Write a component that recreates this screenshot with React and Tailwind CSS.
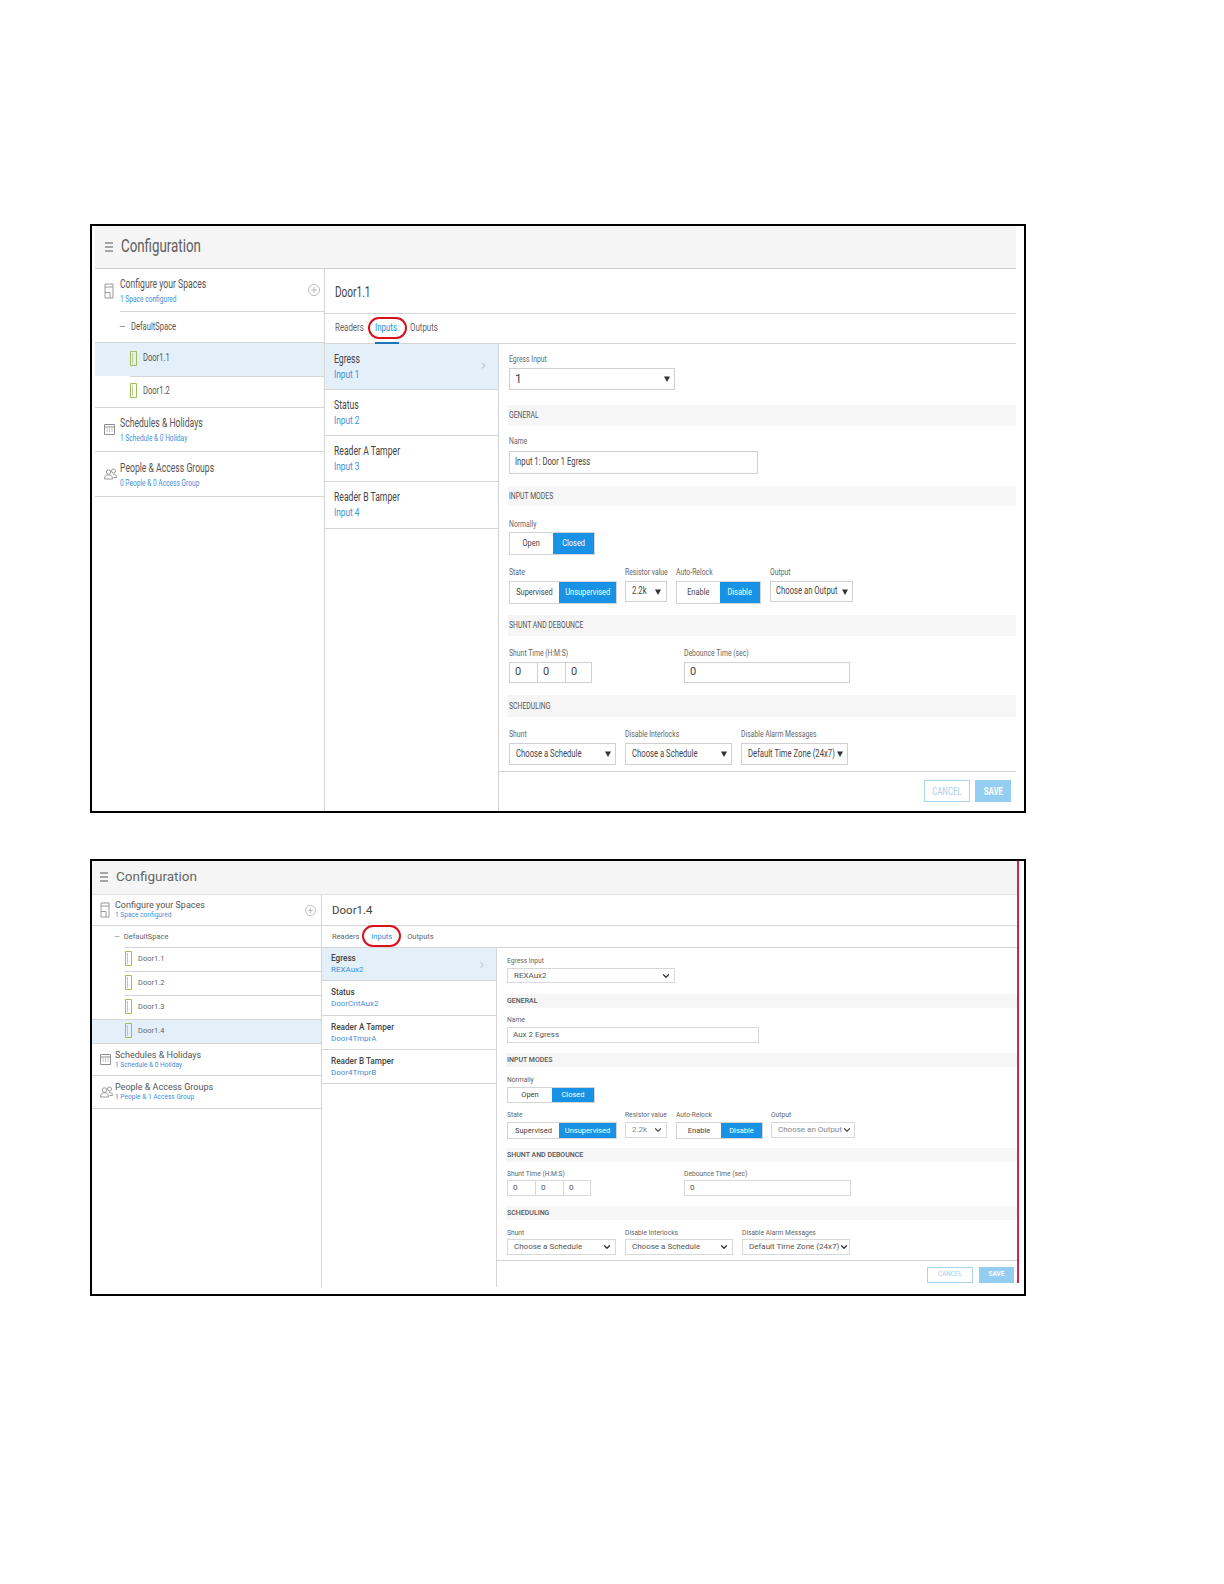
import React from "react";
import { ChevronDown, ChevronRight } from "lucide-react";

const FONT = "font-['Roboto','Liberation_Sans',sans-serif]";

// the first screenshot has a squeezed, condensed face: Roboto narrowed to fit
function C({ children }) {
  return <span className="inline-block origin-left scale-x-[0.72] whitespace-nowrap">{children}</span>;
}

function CM({ children }) {
  return <span className="inline-block origin-center scale-x-[0.78] whitespace-nowrap">{children}</span>;
}

function CF({ children }) {
  return <span className="inline-block w-0 grow origin-left scale-x-[0.72] whitespace-nowrap">{children}</span>;
}

function Hamburger() {
  return (
    <div className="flex w-[8px] flex-col gap-[2px]">
      <div className="h-[2px] bg-[#a5a5a5]" />
      <div className="h-[2px] bg-[#a5a5a5]" />
      <div className="h-[2px] bg-[#a5a5a5]" />
    </div>
  );
}

function BuildingIcon() {
  return (
    <svg width="11" height="16" viewBox="0 0 11 16" fill="none" stroke="#9a9a9a" strokeWidth="1">
      <path d="M1 1h8v14H1z" />
      <path d="M1 4h8" />
      <path d="M1 9.500h5v5.500" />
    </svg>
  );
}

function CalendarIcon() {
  return (
    <svg width="11" height="11" viewBox="0 0 11 11" fill="none" stroke="#8f8f8f" strokeWidth="1">
      <path d="M.5 .5h10v10H.5z" />
      <path d="M.5 3h10" />
      <path d="M2.500 5h1M5 5h1M7.500 5h1M2.500 7h1M5 7h1M7.500 7h1" />
    </svg>
  );
}

function PeopleIcon() {
  return (
    <svg width="13" height="12" viewBox="0 0 13 12" fill="none" stroke="#8f8f8f" strokeWidth="0.9">
      <circle cx="4.500" cy="4" r="2.200" />
      <circle cx="9.500" cy="3" r="2" />
      <path d="M.5 11c0-3 1.500-4.200 4-4.200s4 1.200 4 4.200z" />
      <path d="M9 6.200c2.200 0 3.500 1 3.500 3.300H9.500" />
    </svg>
  );
}

function DoorIcon() {
  return (
    <svg width="7" height="15" viewBox="0 0 7 15" fill="none" stroke="#9cbf5a" strokeWidth="1">
      <path d="M.5 .5h6v14h-6z" />
      <path d="M2.500 2v11" stroke="#c9c9a0" />
    </svg>
  );
}

function PlusCircle({ size }) {
  return (
    <svg width={size} height={size} viewBox="0 0 12 12" fill="none" stroke="#a8a8a8" strokeWidth="0.8">
      <circle cx="6" cy="6" r="5.500" />
      <path d="M6 3v6M3 6h6" />
    </svg>
  );
}

function Triangle() {
  return (
    <svg width="6" height="6" viewBox="0 0 6 6" className="shrink-0" fill="#333">
      <path d="M0 .5h6L3 6z" />
    </svg>
  );
}

function Chevron({ muted }) {
  return <ChevronDown size={10} strokeWidth={3} className={muted ? "shrink-0 text-[#555]" : "shrink-0 text-[#333]"} />;
}

function Toggle({ className, left, right, leftW, text }) {
  return (
    <div className={`flex border border-[#d4d4d4] ${className}`}>
      <div className={`flex items-center justify-center ${leftW} ${text} text-[#444]`}>{left}</div>
      <div className={`flex flex-1 items-center justify-center bg-[#1792e5] ${text} text-white`}>{right}</div>
    </div>
  );
}

function Panel1() {
  const tree = "text-[10.5px] text-[#555]";
  const link = "text-[9.2px] leading-[13px] text-[#3f8fd8]";
  const head = "text-[12px] leading-[16px] text-[#555]";
  const label = "text-[9.5px] leading-[12px] text-[#666]";
  const bar = "flex items-center bg-[#f6f6f6] pl-[1px] text-[9.5px] text-[#555]";
  const box = "flex items-center border border-[#d0d0d0] bg-white text-[10.7px] text-[#444]";
  const items = [
    ["Egress", "Input 1", "h-[46px] bg-[#e3f0fa]"],
    ["Status", "Input 2", "h-[46px]"],
    ["Reader A Tamper", "Input 3", "h-[46px]"],
    ["Reader B Tamper", "Input 4", "h-[47px]"],
  ];
  return (
    <div className={`${FONT} flex h-[589px] w-[936px] flex-col border-2 border-black pl-[3px] pr-[8px]`}>
      <div className="flex h-[43px] shrink-0 items-center gap-[8px] border-b border-[#cfcfcf] bg-[#f5f5f5] pl-[10px]">
        <Hamburger />
        <span className="text-[18.500px] text-[#5d5d5d]"><C>Configuration</C></span>
      </div>
      <div className="flex min-h-0 flex-1">
        <div className="w-[230px] shrink-0 border-r border-[#d5d5d5]">
          <div className="flex h-[43px] items-center">
            <div className="ml-[9px] flex w-[16px] shrink-0"><BuildingIcon /></div>
            <div className="flex h-full flex-1 items-center border-b border-[#d5d5d5]">
              <div className="flex-1">
                <div className={head}><C>Configure your Spaces</C></div>
                <div className={link}><C>1 Space configured</C></div>
              </div>
              <div className="mr-[4px]"><PlusCircle size={12} /></div>
            </div>
          </div>
          <div className={`flex h-[31px] items-center border-b border-[#d5d5d5] pl-[24px] ${tree}`}>
            <span className="mr-[5px] text-[#888]">–</span><C>DefaultSpace</C>
          </div>
          <div className="flex h-[33px] items-center bg-[#e3f0fa] pb-[3px] pl-[35px]">
            <DoorIcon />
            <span className={`ml-[6px] ${tree}`}><C>Door1.1</C></span>
          </div>
          <div className="ml-[35px] flex h-[31px] items-center border-t border-[#d5d5d5] pb-[3px]">
            <DoorIcon />
            <span className={`ml-[6px] ${tree}`}><C>Door1.2</C></span>
          </div>
          <div className="flex h-[44px] items-center border-t border-[#d5d5d5] pl-[9px]">
            <div className="flex w-[16px] shrink-0"><CalendarIcon /></div>
            <div>
              <div className={head}><C>Schedules &amp; Holidays</C></div>
              <div className={link}><C>1 Schedule &amp; 0 Holiday</C></div>
            </div>
          </div>
          <div className="flex h-[46px] items-center border-y border-[#d5d5d5] pl-[9px]">
            <div className="flex w-[16px] shrink-0"><PeopleIcon /></div>
            <div>
              <div className={head}><C>People &amp; Access Groups</C></div>
              <div className={link}><C>0 People &amp; 0 Access Group</C></div>
            </div>
          </div>
        </div>
        <div className="flex min-w-0 flex-1 flex-col">
          <div className="flex h-[45px] shrink-0 items-center border-b border-[#d5d5d5] pl-[10px] pt-[3px] text-[14px] text-[#444]"><C>Door1.1</C></div>
          <div className="flex h-[30px] shrink-0 items-center border-b border-[#d5d5d5] pl-[10px] text-[11px] text-[#666]">
            <span className="w-[40px]"><C>Readers</C></span>
            <span className="relative w-[35px] text-[#1792e5]">
              <C>Inputs</C>
              <span className="absolute -left-[7px] -top-[3px] h-[22px] w-[39px] rounded-full border-2 border-[#d5121e]" />
              <span className="absolute -bottom-[8px] left-0 h-[3px] w-[24px] bg-[#1c75bc]" />
            </span>
            <span><C>Outputs</C></span>
          </div>
          <div className="flex min-h-0 flex-1">
            <div className="w-[174px] shrink-0 border-r border-[#d5d5d5]">
              {items.map(([title, sub, cls]) => (
                <div key={title} className={`relative flex flex-col justify-center border-b border-[#d5d5d5] pl-[9px] ${cls}`}>
                  <div className="text-[12px] leading-[15px] text-[#444]"><C>{title}</C></div>
                  <div className="text-[11.5px] leading-[15px] text-[#3f8fd8]"><C>{sub}</C></div>
                  {title === "Egress" && <ChevronRight size={11} className="absolute right-[9px] top-[16px] text-[#aaa]" />}
                </div>
              ))}
            </div>
            <div className="flex min-w-0 flex-1 flex-col">
              <div className="flex flex-1 flex-col pl-[10px]">
                <div className={`${label} pt-[9px]`}><C>Egress Input</C></div>
                <div className={`${box} mt-[3px] h-[22px] w-[166px] justify-between pl-[5px] pr-[4px] text-[12px]`}>1<Triangle /></div>
                <div className={`${bar} -ml-[1px] mt-[15px] h-[21px]`}><C>GENERAL</C></div>
                <div className={`${label} mt-[9px]`}><C>Name</C></div>
                <div className={`${box} mt-[4px] h-[23px] w-[249px] pl-[5px]`}><C>Input 1: Door 1 Egress</C></div>
                <div className={`${bar} -ml-[1px] mt-[12px] h-[20px]`}><C>INPUT MODES</C></div>
                <div className={`${label} mt-[12px]`}><C>Normally</C></div>
                <Toggle className="mt-[2px] h-[23px] w-[86px]" left={<CM>Open</CM>} right={<CM>Closed</CM>} leftW="w-[43px]" text="text-[9.5px]" />
                <div className="mt-[11px] flex">
                  <div className="w-[116px]">
                    <div className={label}><C>State</C></div>
                    <Toggle className="mt-[3px] h-[23px] w-[108px]" left={<CM>Supervised</CM>} right={<CM>Unsupervised</CM>} leftW="w-[50px]" text="text-[9.5px]" />
                  </div>
                  <div className="w-[51px]">
                    <div className={label}><C>Resistor value</C></div>
                    <div className={`${box} mt-[3px] h-[21px] w-[42px] justify-between pl-[6px] pr-[5px] text-[10.5px]`}><CF>2.2k</CF><Triangle /></div>
                  </div>
                  <div className="w-[94px]">
                    <div className={label}><C>Auto-Relock</C></div>
                    <Toggle className="mt-[3px] h-[23px] w-[85px]" left={<CM>Enable</CM>} right={<CM>Disable</CM>} leftW="w-[43px]" text="text-[9.5px]" />
                  </div>
                  <div>
                    <div className={label}><C>Output</C></div>
                    <div className={`${box} mt-[3px] h-[21px] w-[83px] justify-between pl-[5px] pr-[4px] text-[9.700px]`}><CF>Choose an Output</CF><Triangle /></div>
                  </div>
                </div>
                <div className={`${bar} -ml-[1px] mt-[11px] h-[21px]`}><C>SHUNT AND DEBOUNCE</C></div>
                <div className="mt-[11px] flex">
                  <div className="w-[175px]">
                    <div className={label}><C>Shunt Time (H:M:S)</C></div>
                    <div className="mt-[3px] flex h-[21px] w-[83px] border border-[#d0d0d0] text-[11px] text-[#444]">
                      <div className="flex w-[28px] items-center border-r border-[#d0d0d0] pl-[5px]">0</div>
                      <div className="flex w-[28px] items-center border-r border-[#d0d0d0] pl-[5px]">0</div>
                      <div className="flex flex-1 items-center pl-[5px]">0</div>
                    </div>
                  </div>
                  <div>
                    <div className={label}><C>Debounce Time (sec)</C></div>
                    <div className={`${box} mt-[3px] h-[21px] w-[166px] pl-[5px] text-[11px]`}>0</div>
                  </div>
                </div>
                <div className={`${bar} -ml-[1px] mt-[12px] h-[22px]`}><C>SCHEDULING</C></div>
                <div className="mt-[11px] flex">
                  {[["Shunt", "Choose a Schedule", "w-[116px]"], ["Disable Interlocks", "Choose a Schedule", "w-[116px]"], ["Disable Alarm Messages", "Default Time Zone (24x7)", ""]].map(([l, v, col]) => (
                    <div key={l} className={col}>
                      <div className={label}><C>{l}</C></div>
                      <div className={`${box} mt-[3px] h-[22px] w-[107px] justify-between pl-[6px] pr-[4px] text-[9.500px]`}><CF>{v}</CF><Triangle /></div>
                    </div>
                  ))}
                </div>
              </div>
              <div className="flex h-[40px] shrink-0 items-start justify-end gap-[5px] border-t border-[#d5d5d5] pr-[5px] pt-[8px] text-[10px]">
                <div className="flex h-[22px] w-[46px] items-center justify-center border border-[#a9d4ef] text-[#a9cfe8]"><CM>CANCEL</CM></div>
                <div className="flex h-[22px] w-[36px] items-center justify-center bg-[#93cdf1] font-bold text-white"><CM>SAVE</CM></div>
              </div>
            </div>
          </div>
        </div>
      </div>
    </div>
  );
}

function Panel2() {
  const tree = "text-[7.5px] text-[#666]";
  const link = "text-[6.6px] leading-[9px] text-[#3f8fd8]";
  const head = "text-[9px] leading-[11px] text-[#555]";
  const label = "text-[6.7px] leading-[8px] text-[#666]";
  const bar = "flex items-center bg-[#f6f6f6] pl-[1px] text-[7px] font-medium text-[#555]";
  const box = "flex items-center border border-[#d8d8d8] bg-white text-[8px] text-[#555]";
  const items = [
    ["Egress", "REXAux2", "h-[33px] bg-[#e3f0fa]"],
    ["Status", "DoorCntAux2", "h-[35px]"],
    ["Reader A Tamper", "Door4TmprA", "h-[34px]"],
    ["Reader B Tamper", "Door4TmprB", "h-[34px]"],
  ];
  return (
    <div className={`${FONT} relative mt-[46px] flex h-[437px] w-[936px] flex-col border-2 border-black pr-[6px]`}>
      <div className="flex h-[34px] shrink-0 items-center gap-[8px] border-b border-[#e2e2e2] bg-[#f5f5f5] pb-[2px] pl-[8px]">
        <Hamburger />
        <span className="text-[13.5px] text-[#666]">Configuration</span>
      </div>
      <div className="flex h-[392px] shrink-0">
        <div className="w-[230px] shrink-0 border-r border-[#d5d5d5]">
          <div className="flex h-[31px] items-center border-b border-[#d5d5d5] pl-[8px]">
            <div className="flex w-[15px] shrink-0"><BuildingIcon /></div>
            <div className="flex-1">
              <div className={head}>Configure your Spaces</div>
              <div className={link}>1 Space configured</div>
            </div>
            <div className="mr-[5px]"><PlusCircle size={11} /></div>
          </div>
          <div className={`flex h-[21px] items-center pl-[22px] ${tree}`}>
            <span className="mr-[4px] text-[#888]">—</span>DefaultSpace
          </div>
          {["Door1.1", "Door1.2", "Door1.3"].map((d) => (
            <div key={d} className="ml-[33px] flex h-[24px] items-center border-t border-[#d5d5d5] pb-[2px]">
              <DoorIcon />
              <span className={`ml-[6px] ${tree}`}>{d}</span>
            </div>
          ))}
          <div className="flex h-[25px] items-center border-y border-[#d5d5d5] bg-[#e3f0fa] pb-[2px] pl-[33px]">
            <DoorIcon />
            <span className={`ml-[6px] ${tree}`}>Door1.4</span>
          </div>
          <div className="flex h-[32px] items-center border-b border-[#d5d5d5] pl-[8px]">
            <div className="flex w-[15px] shrink-0"><CalendarIcon /></div>
            <div>
              <div className={head}>Schedules &amp; Holidays</div>
              <div className={link}>1 Schedule &amp; 0 Holiday</div>
            </div>
          </div>
          <div className="flex h-[33px] items-center border-b border-[#d5d5d5] pl-[8px]">
            <div className="flex w-[15px] shrink-0"><PeopleIcon /></div>
            <div>
              <div className={head}>People &amp; Access Groups</div>
              <div className={link}>1 People &amp; 1 Access Group</div>
            </div>
          </div>
        </div>
        <div className="flex min-w-0 flex-1 flex-col">
          <div className="flex h-[31px] shrink-0 items-center border-b border-[#d5d5d5] pl-[10px] pt-[1px] text-[11.5px] text-[#444]">Door1.4</div>
          <div className="flex h-[22px] shrink-0 items-center border-b border-[#d5d5d5] pl-[10px] text-[7.5px] text-[#666]">
            <span>Readers</span>
            <span className="relative ml-[12px] text-[#1792e5]">
              Inputs
              <span className="absolute -left-[9px] -top-[6px] h-[22px] w-[39px] rounded-full border-2 border-[#d5121e]" />
            </span>
            <span className="ml-[15px]">Outputs</span>
          </div>
          <div className="flex min-h-0 flex-1">
            <div className="w-[175px] shrink-0 border-r border-[#d5d5d5]">
              {items.map(([title, sub, cls]) => (
                <div key={title} className={`relative flex flex-col justify-center border-b border-[#d5d5d5] pl-[9px] ${cls}`}>
                  <div className="text-[8.2px] font-medium leading-[11px] text-[#444]">{title}</div>
                  <div className="text-[8px] leading-[11px] text-[#3f8fd8]">{sub}</div>
                  {title === "Egress" && <ChevronRight size={10} className="absolute right-[9px] top-[12px] text-[#aaa]" />}
                </div>
              ))}
            </div>
            <div className="flex min-w-0 flex-1 flex-col">
              <div className="flex flex-1 flex-col pl-[10px]">
                <div className={`${label} pt-[9px]`}>Egress Input</div>
                <div className={`${box} mt-[3px] h-[15px] w-[168px] justify-between pl-[6px] pr-[3px]`}>REXAux2<Chevron /></div>
                <div className={`${bar} -ml-[1px] mt-[11px] h-[14px]`}>GENERAL</div>
                <div className={`${label} mt-[8px]`}>Name</div>
                <div className={`${box} mt-[3px] h-[16px] w-[252px] pl-[5px]`}>Aux 2 Egress</div>
                <div className={`${bar} -ml-[1px] mt-[10px] h-[14px]`}>INPUT MODES</div>
                <div className={`${label} mt-[9px]`}>Normally</div>
                <Toggle className="mt-[3px] h-[16px] w-[88px]" left="Open" right="Closed" leftW="w-[44px]" text="text-[7.5px]" />
                <div className="mt-[8px] flex">
                  <div className="w-[118px]">
                    <div className={label}>State</div>
                    <Toggle className="mt-[3px] h-[17px] w-[110px]" left="Supervised" right="Unsupervised" leftW="w-[51px]" text="text-[7.5px]" />
                  </div>
                  <div className="w-[51px]">
                    <div className={label}>Resistor value</div>
                    <div className={`${box} mt-[3px] h-[16px] w-[42px] justify-between pl-[6px] pr-[3px] text-[#888]`}>2.2k<Chevron muted /></div>
                  </div>
                  <div className="w-[95px]">
                    <div className={label}>Auto-Relock</div>
                    <Toggle className="mt-[3px] h-[17px] w-[87px]" left="Enable" right="Disable" leftW="w-[44px]" text="text-[7.5px]" />
                  </div>
                  <div>
                    <div className={label}>Output</div>
                    <div className={`${box} mt-[3px] h-[16px] w-[84px] justify-between whitespace-nowrap pl-[6px] pr-[3px] text-[7.5px] text-[#888]`}>Choose an Output<Chevron muted /></div>
                  </div>
                </div>
                <div className={`${bar} -ml-[1px] mt-[9px] h-[14px]`}>SHUNT AND DEBOUNCE</div>
                <div className="mt-[8px] flex">
                  <div className="w-[177px]">
                    <div className={label}>Shunt Time (H:M:S)</div>
                    <div className="mt-[2px] flex h-[16px] w-[84px] border border-[#d8d8d8] text-[8px] text-[#555]">
                      <div className="flex w-[28px] items-center border-r border-[#d8d8d8] pl-[5px]">0</div>
                      <div className="flex w-[28px] items-center border-r border-[#d8d8d8] pl-[5px]">0</div>
                      <div className="flex flex-1 items-center pl-[5px]">0</div>
                    </div>
                  </div>
                  <div>
                    <div className={label}>Debounce Time (sec)</div>
                    <div className={`${box} mt-[2px] h-[16px] w-[167px] pl-[5px]`}>0</div>
                  </div>
                </div>
                <div className={`${bar} -ml-[1px] mt-[10px] h-[14px]`}>SCHEDULING</div>
                <div className="mt-[9px] flex">
                  {[["Shunt", "Choose a Schedule", "w-[118px]", "w-[109px]"], ["Disable Interlocks", "Choose a Schedule", "w-[117px]", "w-[108px]"], ["Disable Alarm Messages", "Default Time Zone (24x7)", "", "w-[108px]"]].map(([l, v, col, w]) => (
                    <div key={l} className={col}>
                      <div className={label}>{l}</div>
                      <div className={`${box} mt-[2px] h-[16px] ${w} justify-between whitespace-nowrap pl-[6px] pr-[3px] text-[7.3px]`}>{v}<Chevron /></div>
                    </div>
                  ))}
                </div>
              </div>
              <div className="flex h-[27px] shrink-0 items-start justify-end gap-[6px] border-t border-[#d5d5d5] pr-[4px] pt-[6px] text-[6.5px]">
                <div className="flex h-[16px] w-[46px] items-center justify-center border border-[#a9d4ef] text-[#a9cfe8]">CANCEL</div>
                <div className="flex h-[16px] w-[35px] items-center justify-center bg-[#93cdf1] font-bold text-white">SAVE</div>
              </div>
            </div>
          </div>
        </div>
      </div>
      <div className="absolute bottom-[11px] right-[5px] top-0 w-[2px] bg-[#d0264a]" />
    </div>
  );
}

export default function App() {
  return (
    <div className="h-[1584px] w-[1224px] bg-white pl-[90px] pt-[224px]">
      <Panel1 />
      <Panel2 />
    </div>
  );
}
